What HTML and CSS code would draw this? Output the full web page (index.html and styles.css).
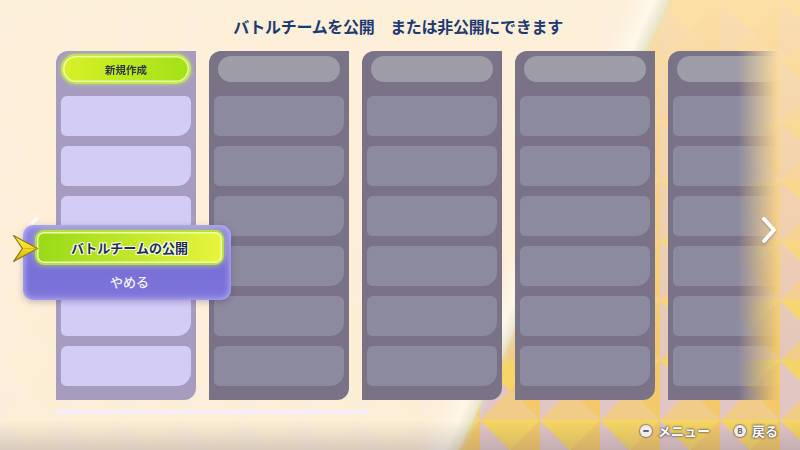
FILE: index.html
```html
<!DOCTYPE html>
<html lang="ja">
<head>
<meta charset="utf-8">
<title>バトルチーム</title>
<link rel="stylesheet" href="styles.css">
</head>
<body>
<h1 class="title">バトルチームを公開　または非公開にできます</h1>
<main class="board">
  <div class="columns">
    <section class="col mine">
      <div class="pill new">新規作成</div>
      <div class="slot"></div><div class="slot"></div><div class="slot"></div>
      <div class="slot"></div><div class="slot"></div><div class="slot"></div>
    </section>
    <section class="col">
      <div class="pill"></div>
      <div class="slot"></div><div class="slot"></div><div class="slot"></div>
      <div class="slot"></div><div class="slot"></div><div class="slot"></div>
    </section>
    <section class="col">
      <div class="pill"></div>
      <div class="slot"></div><div class="slot"></div><div class="slot"></div>
      <div class="slot"></div><div class="slot"></div><div class="slot"></div>
    </section>
    <section class="col">
      <div class="pill"></div>
      <div class="slot"></div><div class="slot"></div><div class="slot"></div>
      <div class="slot"></div><div class="slot"></div><div class="slot"></div>
    </section>
    <section class="col">
      <div class="pill"></div>
      <div class="slot"></div><div class="slot"></div><div class="slot"></div>
      <div class="slot"></div><div class="slot"></div><div class="slot"></div>
    </section>
  </div>
  <svg class="chev chev-left" width="18" height="28" viewBox="0 0 18 28"><polyline points="14,3 4,14 14,25" fill="none" stroke="#ffffff" stroke-width="3.5" stroke-linecap="round" stroke-linejoin="round"/></svg>
  <svg class="chev chev-right" width="18" height="28" viewBox="0 0 18 28"><polyline points="4,3 14,14 4,25" fill="none" stroke="#ffffff" stroke-width="4" stroke-linecap="round" stroke-linejoin="round"/></svg>
  <div class="menu">
    <div class="menu-item sel">バトルチームの公開</div>
    <div class="menu-item cancel">やめる</div>
  </div>
  <svg class="cursor" width="27" height="29" viewBox="0 0 27 29">
    <defs>
      <linearGradient id="cg" x1="0" y1="0" x2="0" y2="1">
        <stop offset="0" stop-color="#fbf05a"/>
        <stop offset="0.5" stop-color="#f2d81e"/>
        <stop offset="1" stop-color="#d4b00c"/>
      </linearGradient>
    </defs>
    <polygon points="1.5,1.5 25.5,14.5 1.5,27.5 10.5,14.5" fill="url(#cg)" stroke="#8c7a12" stroke-width="1.2" stroke-linejoin="round"/>
    <polyline points="10.5,14.5 25.5,14.5" stroke="#c9a410" stroke-width="1" opacity="0.6"/>
  </svg>
</main>
<div class="scroll"></div>
<footer class="footer">
  <span class="hint"><span class="btn-icon minus"></span>メニュー</span>
  <span class="hint"><span class="btn-icon">B</span>戻る</span>
</footer>
</body>
</html>
```
FILE: styles.css
```css
html, body {
  margin: 0;
  padding: 0;
}

body {
  width: 800px;
  height: 450px;
  overflow: hidden;
  font-family: "Noto Sans CJK JP", "Noto Sans", sans-serif;
  background:
    linear-gradient(to bottom, rgba(0, 0, 0, 0) 420px, rgba(120, 105, 110, 0.26) 450px),
    linear-gradient(115deg, rgba(255, 255, 255, 0) 62%, rgba(255, 255, 255, 0.45) 64.8%, rgba(222, 226, 200, 0.6) 66%, rgba(255, 255, 255, 0) 67%),
    linear-gradient(115deg, rgba(253, 241, 221, 0.93) 0 66%, rgba(253, 241, 221, 0) 66.4%),
    linear-gradient(to bottom, rgba(251, 224, 172, 0.92) 0, rgba(249, 214, 158, 0.72) 45%, rgba(244, 204, 130, 0.3) 80%, rgba(244, 204, 130, 0.15) 100%),
    conic-gradient(from 45deg, #f3c862 0 25%, #f0cb8a 0 50%, #dcc4d6 0 75%, #f6d85c 0) 0 0 / 60px 60px;
}

.title {
  margin: 0;
  padding: 15px 4px 0 0;
  height: 22px;
  line-height: 22px;
  text-align: center;
  font-size: 16px;
  font-weight: 700;
  letter-spacing: -0.3px;
  color: #1f3a72;
}

.board {
  position: relative;
  margin-top: 14px;
  padding-left: 56px;
}

.columns {
  display: flex;
  gap: 13px;
  -webkit-mask-image: linear-gradient(to right, #000 682px, rgba(0, 0, 0, 0) 722px);
  mask-image: linear-gradient(to right, #000 682px, rgba(0, 0, 0, 0) 722px);
}

.col {
  flex: 0 0 140px;
  width: 140px;
  box-sizing: border-box;
  padding: 5px 5px 14px;
  display: flex;
  flex-direction: column;
  gap: 10px;
  background: #7a7387;
  border-radius: 12px 0 12px 0;
}

.pill {
  height: 26px;
  margin: 0 4px 4px;
  border-radius: 13px;
  background: #9e9ca6;
}

.slot {
  height: 40px;
  border-radius: 6px 6px 14px 5px;
  background: #8c8a9e;
}

.col.mine {
  background: #a59cbf;
}

.col.mine .slot {
  background: #d3cdf6;
}

.pill.new {
  margin: 0 2px 4px;
  display: flex;
  align-items: center;
  justify-content: center;
  font-size: 10.5px;
  font-weight: 700;
  color: #2c3a48;
  background: linear-gradient(to right, #d9f028, #a2e116);
  box-shadow: inset 0 0 0 1.5px rgba(240, 255, 190, 0.85), 0 0 0 2px #c4e656, 0 0 5px 2px rgba(205, 240, 90, 0.7);
}

.chev {
  position: absolute;
  top: 165px;
}

.chev-left {
  left: 22px;
  opacity: 0.85;
}

.chev-right {
  left: 760px;
  filter: drop-shadow(0 1px 1px rgba(90, 80, 100, 0.45));
}

.menu {
  position: absolute;
  left: 23px;
  top: 174px;
  width: 208px;
  height: 75px;
  box-sizing: border-box;
  padding: 7px 9px 0 14px;
  border-radius: 10px;
  background: linear-gradient(to bottom, #8c84e6, #7870d8 60%, #7c74da);
  box-shadow: inset 0 0 6px 1px rgba(230, 225, 255, 0.6), 0 2px 6px rgba(60, 40, 120, 0.3);
}

.menu-item {
  display: flex;
  align-items: center;
  justify-content: center;
  font-size: 13px;
}

.menu-item.sel {
  height: 31px;
  border-radius: 7px;
  font-weight: 700;
  color: #1e2c5a;
  background: linear-gradient(to right, #98da18, #e8f43e);
  box-shadow: inset 0 0 0 1.5px #eaffb0, 0 0 0 2px #b8e040, 0 0 6px 2px rgba(215, 245, 95, 0.6);
  text-shadow: 1px 0 0 #f4ffd8, -1px 0 0 #f4ffd8, 0 1px 0 #f4ffd8, 0 -1px 0 #f4ffd8, 1px 1px 0 #f4ffd8, -1px -1px 0 #f4ffd8, 1px -1px 0 #f4ffd8, -1px 1px 0 #f4ffd8;
}

.menu-item.cancel {
  height: 36px;
  font-weight: 500;
  color: #f6f4ff;
}

.cursor {
  position: absolute;
  left: 12px;
  top: 183px;
}

.scroll {
  margin: 10px 0 0 53px;
  width: 315px;
  height: 4px;
  border-radius: 2px;
  background: #f4edfb;
}

.footer {
  display: flex;
  justify-content: flex-end;
  gap: 24px;
  margin-top: 9px;
  padding-right: 22px;
  font-size: 13px;
  font-weight: 700;
  line-height: 16px;
  color: #ffffff;
  text-shadow: 0 0 1px #5a5060, 0 0 2px rgba(70, 60, 80, 0.9), 0 0 3px rgba(70, 60, 80, 0.6);
}

.hint {
  display: flex;
  align-items: center;
  gap: 6px;
}

.btn-icon {
  width: 12px;
  height: 12px;
  border-radius: 50%;
  background: #f0ecf2;
  color: #6a6470;
  font-size: 8px;
  font-weight: 700;
  line-height: 12px;
  text-align: center;
  text-shadow: none;
  box-shadow: 0 0 1px 1px rgba(90, 80, 100, 0.6);
  display: flex;
  align-items: center;
  justify-content: center;
}

.btn-icon.minus::before {
  content: "";
  width: 6px;
  height: 2px;
  border-radius: 1px;
  background: #6a6470;
}
```
